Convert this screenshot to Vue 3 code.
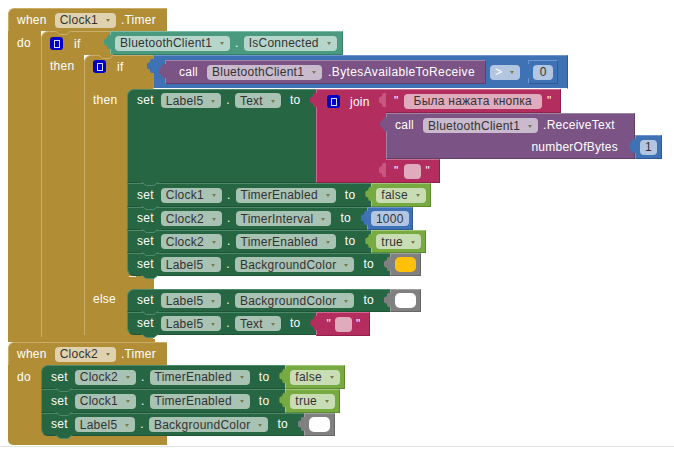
<script setup>
const thenRows = [
  { comp: "Clock1", prop: "TimerEnabled", val: "false", kind: "logic", tall: true },
  { comp: "Clock2", prop: "TimerInterval", val: "1000", kind: "number" },
  { comp: "Clock2", prop: "TimerEnabled", val: "true", kind: "logic" },
  { comp: "Label5", prop: "BackgroundColor", val: "", kind: "amber" },
];

const elseRows = [
  { comp: "Label5", prop: "BackgroundColor", val: "", kind: "white" },
  { comp: "Label5", prop: "Text", val: "", kind: "text" },
];

const clock2Rows = [
  { comp: "Clock2", prop: "TimerEnabled", val: "false", kind: "logic", tall: true },
  { comp: "Clock1", prop: "TimerEnabled", val: "true", kind: "logic", tall: true },
  { comp: "Label5", prop: "BackgroundColor", val: "", kind: "white" },
];
</script>

<template>
  <div class="workspace">
    <!-- when Clock1.Timer -->
    <div class="event">
      <div class="event-head">
        <span class="kw">when</span>
        <span class="field dd">Clock1</span>
        <span class="kw dot-left">.Timer</span>
      </div>
      <div class="event-body">
        <div class="event-arm"><span class="kw">do</span></div>
        <div class="ctrl">
          <div class="ctrl-head outer">
            <div class="ctrl-title">
              <span class="mutator"></span>
              <span class="kw">if</span>
            </div>
            <div class="val teal getter">
              <span class="field dd">BluetoothClient1</span>
              <span class="kw sep">.</span>
              <span class="field dd">IsConnected</span>
            </div>
          </div>
          <div class="clause">
            <div class="ctrl-arm"><span class="kw">then</span></div>
            <div class="ctrl">
              <div class="ctrl-head inner">
                <div class="ctrl-title">
                  <span class="mutator"></span>
                  <span class="kw">if</span>
                </div>
                <div class="val blue compare">
                  <div class="val purple call-short">
                    <span class="kw">call</span>
                    <span class="field dd">BluetoothClient1</span>
                    <span class="kw dot-left">.BytesAvailableToReceive</span>
                  </div>
                  <span class="field dd op">&gt;</span>
                  <div class="val blue lit">
                    <span class="field num">0</span>
                  </div>
                </div>
              </div>
              <div class="clause">
                <div class="ctrl-arm"><span class="kw">then</span></div>
                <div class="stack">
                  <div class="stmt-row join-row">
                    <div class="set">
                      <span class="kw">set</span>
                      <span class="field dd">Label5</span>
                      <span class="kw sep">.</span>
                      <span class="field dd">Text</span>
                      <span class="kw to">to</span>
                    </div>
                    <div class="val pink join">
                      <span class="mutator"></span>
                      <span class="kw">join</span>
                    </div>
                    <div class="join-items">
                      <div class="val pink str">
                        <span class="kw">"</span>
                        <span class="field wide">Была нажата кнопка</span>
                        <span class="kw">"</span>
                      </div>
                      <div class="call-wrap">
                        <div class="val purple call-long">
                          <div class="call-line">
                            <span class="kw">call</span>
                            <span class="field dd">BluetoothClient1</span>
                            <span class="kw dot-left">.ReceiveText</span>
                          </div>
                          <div class="call-arg"><span class="kw">numberOfBytes</span></div>
                        </div>
                        <div class="val blue lit arg">
                          <span class="field num">1</span>
                        </div>
                      </div>
                      <div class="val pink str">
                        <span class="kw">"</span>
                        <span class="field blank"></span>
                        <span class="kw">"</span>
                      </div>
                    </div>
                  </div>
                  <div v-for="r in thenRows" :key="r.comp + r.prop" class="stmt-row" :class="{ tall: r.tall }">
                    <div class="set">
                      <span class="kw">set</span>
                      <span class="field dd">{{ r.comp }}</span>
                      <span class="kw sep">.</span>
                      <span class="field dd">{{ r.prop }}</span>
                      <span class="kw to">to</span>
                    </div>
                    <div class="val" :class="r.kind">
                      <span class="field" :class="{ dd: r.kind === 'logic', num: r.kind === 'number', swatch: !r.val }">{{ r.val }}</span>
                    </div>
                  </div>
                </div>
              </div>
              <div class="else-gap"></div>
              <div class="clause">
                <div class="ctrl-arm else-arm"><span class="kw">else</span></div>
                <div class="stack">
                  <div v-for="r in elseRows" :key="r.prop" class="stmt-row">
                    <div class="set">
                      <span class="kw">set</span>
                      <span class="field dd">{{ r.comp }}</span>
                      <span class="kw sep">.</span>
                      <span class="field dd">{{ r.prop }}</span>
                      <span class="kw to">to</span>
                    </div>
                    <div v-if="r.kind === 'text'" class="val pink str short">
                      <span class="kw">"</span>
                      <span class="field blank"></span>
                      <span class="kw">"</span>
                    </div>
                    <div v-else class="val" :class="r.kind">
                      <span class="field swatch"></span>
                    </div>
                  </div>
                </div>
              </div>
              <div class="ctrl-foot inner-foot"></div>
            </div>
          </div>
          <div class="ctrl-foot outer-foot"></div>
        </div>
      </div>
      <div class="event-foot first-foot"></div>
    </div>

    <!-- when Clock2.Timer -->
    <div class="event">
      <div class="event-head">
        <span class="kw">when</span>
        <span class="field dd">Clock2</span>
        <span class="kw dot-left">.Timer</span>
      </div>
      <div class="event-body">
        <div class="event-arm"><span class="kw">do</span></div>
        <div class="stack">
          <div v-for="r in clock2Rows" :key="r.comp + r.prop" class="stmt-row" :class="{ tall: r.tall }">
            <div class="set">
              <span class="kw">set</span>
              <span class="field dd">{{ r.comp }}</span>
              <span class="kw sep">.</span>
              <span class="field dd">{{ r.prop }}</span>
              <span class="kw to">to</span>
            </div>
            <div class="val" :class="r.kind">
              <span class="field" :class="{ dd: r.kind === 'logic', swatch: !r.val }">{{ r.val }}</span>
            </div>
          </div>
        </div>
      </div>
      <div class="event-foot"></div>
    </div>
  </div>
</template>

<style scoped>
.workspace {
  width: 674px;
  height: 447px;
  box-sizing: border-box;
  padding: 8px 0 0 8px;
  background: #fff;
  border-bottom: 1px solid #e4e4e4;
  font-family: "Liberation Sans", Arial, sans-serif;
  font-size: 12px;
  letter-spacing: 0.25px;
  overflow: hidden;
}

.kw {
  color: #fff;
  line-height: 15px;
  white-space: nowrap;
}

.dot-left {
  margin-left: 5px;
}

.sep {
  margin: 0 5px;
}

/* editable chips */
.field {
  display: inline-flex;
  align-items: center;
  height: 15px;
  padding: 0 5px;
  border-radius: 4px;
  background: rgba(255, 255, 255, 0.6);
  color: #333;
  white-space: nowrap;
}

.field.dd::after {
  content: "";
  margin: 1px 6px 0 8px;
  border-left: 2.5px solid transparent;
  border-right: 2.5px solid transparent;
  border-top: 3px solid #7d7a4a;
}

.field.dd {
  padding-right: 0;
}

.field.num {
  padding: 0 5px;
  justify-content: center;
}

.field.blank {
  width: 17px;
  padding: 0;
}

.field.wide {
  padding: 0 10px;
}

.field.swatch {
  width: 21px;
  padding: 0;
  border-radius: 5px;
}

/* event block */
.event-head {
  position: relative;
  box-sizing: border-box;
  width: 159px;
  height: 23px;
  padding: 0 0 0 8px;
  display: flex;
  align-items: center;
  background: #b18e35;
  border-top: 1px solid #c9ae6a;
  border-left: 1px solid #c9ae6a;
  border-radius: 6px 0 0 0;
}

.event-head .field {
  margin-left: 8px;
}

.event-body {
  display: flex;
}

.event-arm {
  width: 33px;
  flex-shrink: 0;
  box-sizing: border-box;
  padding: 5px 0 0 9px;
  background: #b18e35;
}

.event-foot {
  height: 9px;
  width: 159px;
  background: #b18e35;
  border-radius: 0 0 0 5px;
}

.first-foot {
  height: 3px;
  width: 147px;
  border-radius: 0;
}

/* if block */
.ctrl-head {
  position: relative;
  display: flex;
}

.ctrl-head::before,
.ctrl-head::after {
  content: "";
  position: absolute;
  left: 14px;
  width: 16px;
  height: 4px;
  clip-path: polygon(0 0, 100% 0, 72% 100%, 28% 100%);
}

.ctrl-head::before {
  top: 0;
  background: #c9ae6a;
}

.ctrl-head::after {
  top: -1px;
  background: #b18e35;
}

.ctrl-head.outer {
  height: 24px;
}

.ctrl-head.inner {
  height: 34px;
}

.ctrl-title {
  box-sizing: border-box;
  width: 69px;
  padding: 5px 0 0 8px;
  display: flex;
  align-items: flex-start;
  gap: 11px;
  background: #b18e35;
  border-top: 1px solid #c9ae6a;
  border-left: 1px solid #c9ae6a;
  border-radius: 7px 0 0 0;
}

.ctrl-head.inner .ctrl-title {
  padding-top: 4px;
}

.mutator {
  box-sizing: border-box;
  width: 13px;
  height: 13px;
  flex-shrink: 0;
  display: flex;
  align-items: center;
  justify-content: center;
  border-radius: 3px;
  background: #0000c4;
}

.mutator::after {
  content: "";
  box-sizing: border-box;
  width: 6px;
  height: 8px;
  border: 1px solid #d4dcff;
}

.clause {
  display: flex;
}

.ctrl-arm {
  box-sizing: border-box;
  width: 43px;
  flex-shrink: 0;
  padding: 4px 0 0 8px;
  background: #b18e35;
  border-left: 1px solid #c9ae6a;
}

.else-arm {
  padding-top: 3px;
}

.else-gap {
  position: relative;
  box-sizing: border-box;
  width: 70px;
  height: 13px;
  background: #b18e35;
  border-left: 1px solid #c9ae6a;
}

.else-gap::before {
  content: "";
  position: absolute;
  left: 44px;
  top: 0;
  width: 7px;
  height: 1px;
  background: #f2ead6;
}

.ctrl-foot {
  height: 2px;
  background: #b18e35;
}

.inner-foot {
  width: 69px;
}

.outer-foot {
  width: 112px;
}

/* statements */
.stack {
  background: linear-gradient(to right, #b18e35 8px, transparent 8px);
}

.stmt-row {
  display: flex;
  height: 23px;
}

.stmt-row.tall {
  height: 24px;
}

.stmt-row.join-row {
  height: 94px;
}

.set {
  position: relative;
  box-sizing: border-box;
  display: flex;
  align-items: center;
  padding: 0 16px 0 9px;
  background: #266643;
  border-top: 1px solid #4d8a6c;
  border-left: 1px solid #4d8a6c;
  border-bottom: 1px solid #1e5537;
}

.set::before,
.set::after {
  content: "";
  position: absolute;
  left: 13px;
  width: 18px;
  height: 4px;
  z-index: 2;
  clip-path: polygon(0 0, 100% 0, 72% 100%, 28% 100%);
}

.set::before {
  bottom: -4px;
  background: #4d8a6c;
}

.set::after {
  bottom: -3px;
  background: #266643;
}

.stack > .stmt-row:first-child .set {
  border-top-left-radius: 7px;
}

.stack > .stmt-row:last-child .set {
  border-bottom-left-radius: 7px;
}

.set > .kw:first-child {
  margin-right: 7px;
}

.set .to {
  margin-left: 9px;
}

.join-row .set {
  align-items: flex-start;
  padding-top: 3px;
  width: 189px;
}

/* value blocks */
.val {
  position: relative;
  box-sizing: border-box;
  display: flex;
  align-items: center;
  padding: 0 4px;
  --hi: #a2c878;
  --lo: #5d8a2f;
  background: #77ab41;
  border: 1px solid var(--hi);
  border-right-color: var(--lo);
  border-bottom-color: var(--lo);
}

.val::before {
  content: "";
  position: absolute;
  left: -7px;
  top: 3px;
  width: 7px;
  height: 14px;
  background: inherit;
  clip-path: path("M7 0H5C3 0 3 2 3 3C3 4 0 3 0 6V8C0 11 3 10 3 11C3 12 3 14 5 14H7Z");
}

.number,
.blue {
  --hi: #6f97cf;
  --lo: #2f5a96;
  background: #3f71b5;
}

.number {
  padding: 0 3px;
}

.teal {
  --hi: #7dbba3;
  --lo: #35806a;
  background: #4a9a80;
}

.purple {
  --hi: #a084a8;
  --lo: #5f3f68;
  background: #7c5385;
}

.pink {
  --hi: #cf6a90;
  --lo: #8f2149;
  background: #b32d5e;
}

.amber,
.white {
  --hi: #a0a0a0;
  --lo: #666;
  background: #808080;
}

.amber .field {
  background: #ffc107;
}

.white .field {
  background: #fff;
}

.getter {
  height: 24px;
  padding: 0 5px 0 4px;
}

.compare {
  height: 34px;
  padding: 0 9px 0 11px;
  border-bottom-color: #fff;
}

.call-short {
  height: 24px;
  padding: 0 10px 0 13px;
}

.call-short .field {
  margin-left: 9px;
}

.call-short .dot-left {
  margin-left: 6px;
  letter-spacing: 0.38px;
}

.op {
  margin-left: 4px;
  color: #fff;
}

.lit {
  height: 24px;
  margin-left: 8px;
}

.lit .field.num {
  min-width: 10px;
}

.join {
  width: 70px;
  align-items: flex-start;
  gap: 10px;
  padding: 5px 0 0 10px;
  border-right: 0;
}

.join-items {
  display: flex;
  flex-direction: column;
  align-items: flex-start;
}

/* sockets on the join block show up as a lighter bracket */
.join-items > .str::before {
  background: #c9567f;
}

.str {
  height: 24px;
  padding: 0 9px 0 8px;
  gap: 5px;
  border-left: 0;
}

.str.short {
  padding: 0 9px;
  gap: 4px;
  border-left: 1px solid var(--hi);
}

.call-wrap {
  display: flex;
  align-items: flex-end;
  height: 46px;
}

.call-long {
  width: 249px;
  height: 46px;
  flex-direction: column;
  align-items: stretch;
  padding: 0 16px 0 8px;
}

.call-line {
  height: 23px;
  display: flex;
  align-items: center;
}

.call-line .field {
  margin-left: 9px;
}

.call-arg {
  height: 21px;
  display: flex;
  align-items: center;
  justify-content: flex-end;
}

.lit.arg {
  margin-left: 0;
}

.lit.arg .field.num {
  min-width: 6px;
}
</style>
